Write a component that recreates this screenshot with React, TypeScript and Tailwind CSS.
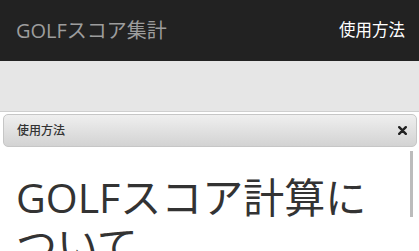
export default function App() {
  const font = { fontFamily: '"Open Sans", "Noto Sans CJK JP", sans-serif' };

  return (
    <div className="w-[419px] h-[251px] overflow-hidden bg-white" style={font}>
      {/* navbar */}
      <header className="h-[61px] bg-[#222222] flex items-center justify-between pl-4 pr-[14px]">
        <span className="text-[20px] leading-none text-[#9d9d9d]">GOLFスコア集計</span>
        <span className="text-[16.5px] leading-none text-white">使用方法</span>
      </header>

      <div className="h-[51px] bg-[#e6e6e6] border-b border-[#cfcfcf]" />

      {/* dialog */}
      <div className="pt-[2px]">
        <div className="ml-[3px] mr-[2px] h-[33px] rounded-[5px] border border-[#c6c6c6] bg-gradient-to-b from-[#efefef] to-[#d3d3d3] flex items-center justify-between pl-[13px]">
          <span className="text-[12px] font-medium text-[#333]">使用方法</span>
          <button className="w-[22px] h-[27px] mr-[3px] rounded-[3px] flex items-center justify-center text-[#222]">
            <svg width="9" height="9" viewBox="0 0 9 9">
              <path d="M1.2 1.2 L7.8 7.8 M7.8 1.2 L1.2 7.8" stroke="#222" strokeWidth="2.4" strokeLinecap="round" />
            </svg>
          </button>
        </div>

        <div className="flex">
          <div className="flex-1 pl-4 pr-[14px] pt-[26px]">
            <h1 className="text-[41px] leading-[48px] text-[#333] font-normal">GOLFスコア計算について</h1>
          </div>
          <div className="w-[3px] h-[66px] mt-[4px] mr-[6px] bg-[#bcbcbc]" />
        </div>
      </div>
    </div>
  );
}
